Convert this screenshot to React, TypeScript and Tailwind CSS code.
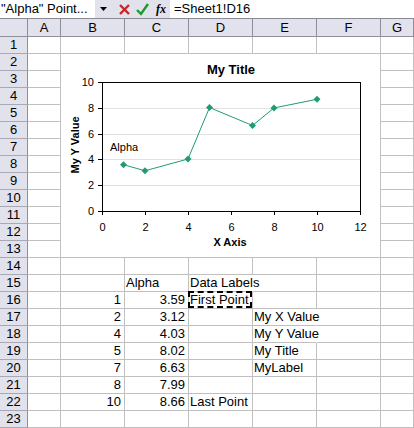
import React from "react";

const font = "font-['Liberation_Sans',Arial,sans-serif]";

type Cell = { text: string; align?: "left" | "right"; open?: boolean; marquee?: boolean };

const columns = [
  { key: "A", w: "w-[33px]" },
  { key: "B", w: "w-[64px]" },
  { key: "C", w: "w-[64px]" },
  { key: "D", w: "w-[64px]" },
  { key: "E", w: "w-[64px]" },
  { key: "F", w: "w-[64px]" },
  { key: "G", w: "w-[33px]" },
];

const data: Record<number, Record<string, Cell>> = {
  15: { C: { text: "Alpha" }, D: { text: "Data Labels", open: true } },
  16: { B: { text: "1", align: "right" }, C: { text: "3.59", align: "right" }, D: { text: "First Point", marquee: true } },
  17: { B: { text: "2", align: "right" }, C: { text: "3.12", align: "right" }, E: { text: "My X Value", open: true } },
  18: { B: { text: "4", align: "right" }, C: { text: "4.03", align: "right" }, E: { text: "My Y Value", open: true } },
  19: { B: { text: "5", align: "right" }, C: { text: "8.02", align: "right" }, E: { text: "My Title" } },
  20: { B: { text: "7", align: "right" }, C: { text: "6.63", align: "right" }, E: { text: "MyLabel" } },
  21: { B: { text: "8", align: "right" }, C: { text: "7.99", align: "right" } },
  22: { B: { text: "10", align: "right" }, C: { text: "8.66", align: "right" }, D: { text: "Last Point" } },
};

const points: [number, number][] = [
  [1, 3.59],
  [2, 3.12],
  [4, 4.03],
  [5, 8.02],
  [7, 6.63],
  [8, 7.99],
  [10, 8.66],
];

const X = (v: number) => 41 + v * 21.5;
const Y = (v: number) => 157 - v * 12.9;
const teal = "#1f9b78";
const svgFont = "'Liberation Sans', Arial, sans-serif";

function Chart() {
  const line = points.map(([x, y], i) => `${i ? "L" : "M"}${X(x)} ${Y(y)}`).join(" ");
  return (
    <svg width="319" height="203" className="block bg-white" fontFamily={svgFont}>
      <text x="170" y="20" textAnchor="middle" fontSize="13" fontWeight="bold">
        My Title
      </text>
      {[2, 4, 6, 8].map((v) => (
        <line key={v} x1="42" x2="299" y1={Math.round(Y(v)) + 0.5} y2={Math.round(Y(v)) + 0.5} stroke="#e2e2e2" />
      ))}
      <rect x="41.5" y="28.5" width="258" height="129" fill="none" stroke="#000" shapeRendering="crispEdges" />
      {[0, 2, 4, 6, 8, 10].map((v) => (
        <g key={v}>
          <line x1="37" x2="41" y1={Math.round(Y(v)) + 0.5} y2={Math.round(Y(v)) + 0.5} stroke="#000" />
          <text x="33" y={Math.round(Y(v)) + 4} textAnchor="end" fontSize="11">
            {v}
          </text>
        </g>
      ))}
      {[0, 2, 4, 6, 8, 10, 12].map((v) => (
        <g key={v}>
          <line x1={Math.round(X(v)) + 0.5} x2={Math.round(X(v)) + 0.5} y1="157" y2="161" stroke="#000" />
          <text x={Math.round(X(v)) + 0.5} y="177" textAnchor="middle" fontSize="11">
            {v}
          </text>
        </g>
      ))}
      <text x="169" y="192" textAnchor="middle" fontSize="11" fontWeight="bold">
        X Axis
      </text>
      <text transform="translate(18 91) rotate(-90)" textAnchor="middle" fontSize="11" fontWeight="bold">
        My Y Value
      </text>
      <text x="49" y="97" fontSize="11">
        Alpha
      </text>
      <path d={line} fill="none" stroke={teal} strokeWidth="1" />
      {points.map(([x, y]) => {
        const cx = X(x);
        const cy = Y(y);
        return (
          <path
            key={x}
            d={`M${cx} ${cy - 3.5} L${cx + 3.5} ${cy} L${cx} ${cy + 3.5} L${cx - 3.5} ${cy} Z`}
            fill={teal}
          />
        );
      })}
    </svg>
  );
}

function FormulaBar() {
  return (
    <div className="flex h-[19px] border-b border-[#8a8a96] bg-[#e2e2ec] text-[13px] leading-[18px]">
      <div className="w-[95px] shrink-0 bg-white pl-px whitespace-nowrap">"Alpha" Point...</div>
      <div className="flex w-[75px] shrink-0 items-center">
        <svg width="75" height="18" className="block">
          <path d="M5 7 L12 7 L8.5 11 Z" fill="#000" />
          <path d="M25 5 L34 14 M34 5 L25 14" stroke="#c4262b" strokeWidth="2.4" />
          <path d="M42 10 L46 14 L53 4" fill="none" stroke="#1e9a2c" strokeWidth="2.4" />
          <text x="61" y="13" fontSize="12" fontStyle="italic" fontWeight="bold" fontFamily="'Liberation Serif', serif">
            fx
          </text>
        </svg>
      </div>
      <div className="flex-1 bg-white pl-1 whitespace-nowrap">=Sheet1!D16</div>
    </div>
  );
}

export default function App() {
  const rows = Array.from({ length: 23 }, (_, i) => i + 1);
  return (
    <div className={`${font} w-[414px] h-[428px] overflow-hidden bg-white text-black`}>
      <FormulaBar />
      <div className="flex h-[18px] text-[13px] leading-[17px]">
        <div className="w-[28px] shrink-0 border-r border-b border-[#8f8f9c] bg-[#e2e2ec]" />
        {columns.map((c) => (
          <div key={c.key} className={`${c.w} shrink-0 border-r border-b border-[#8f8f9c] bg-[#e2e2ec] text-center`}>
            {c.key}
          </div>
        ))}
      </div>
      <div className="relative">
        {rows.map((r) => (
          <div key={r} className="flex h-[17px] text-[13px] leading-[16px]">
            <div className="w-[28px] shrink-0 border-r border-b border-r-[#8f8f9c] border-b-[#a9a9b6] bg-[#e2e2ec] text-center">
              {r}
            </div>
            {columns.map((c) => {
              const cell = data[r]?.[c.key];
              return (
                <div
                  key={c.key}
                  className={`relative ${c.w} shrink-0 border-b border-r border-b-[#c0c0c0] whitespace-nowrap ${
                    cell?.open ? "border-r-transparent" : "border-r-[#c0c0c0]"
                  } ${cell?.align === "right" ? "pr-[3px] text-right" : "pl-px"}`}
                >
                  {cell?.text}
                  {cell?.marquee && (
                    <div className="absolute -left-px -top-px right-0 bottom-0 border-2 border-dashed border-black" />
                  )}
                </div>
              );
            })}
          </div>
        ))}
        <div className="absolute left-[61px] top-[17px]">
          <Chart />
        </div>
      </div>
    </div>
  );
}
